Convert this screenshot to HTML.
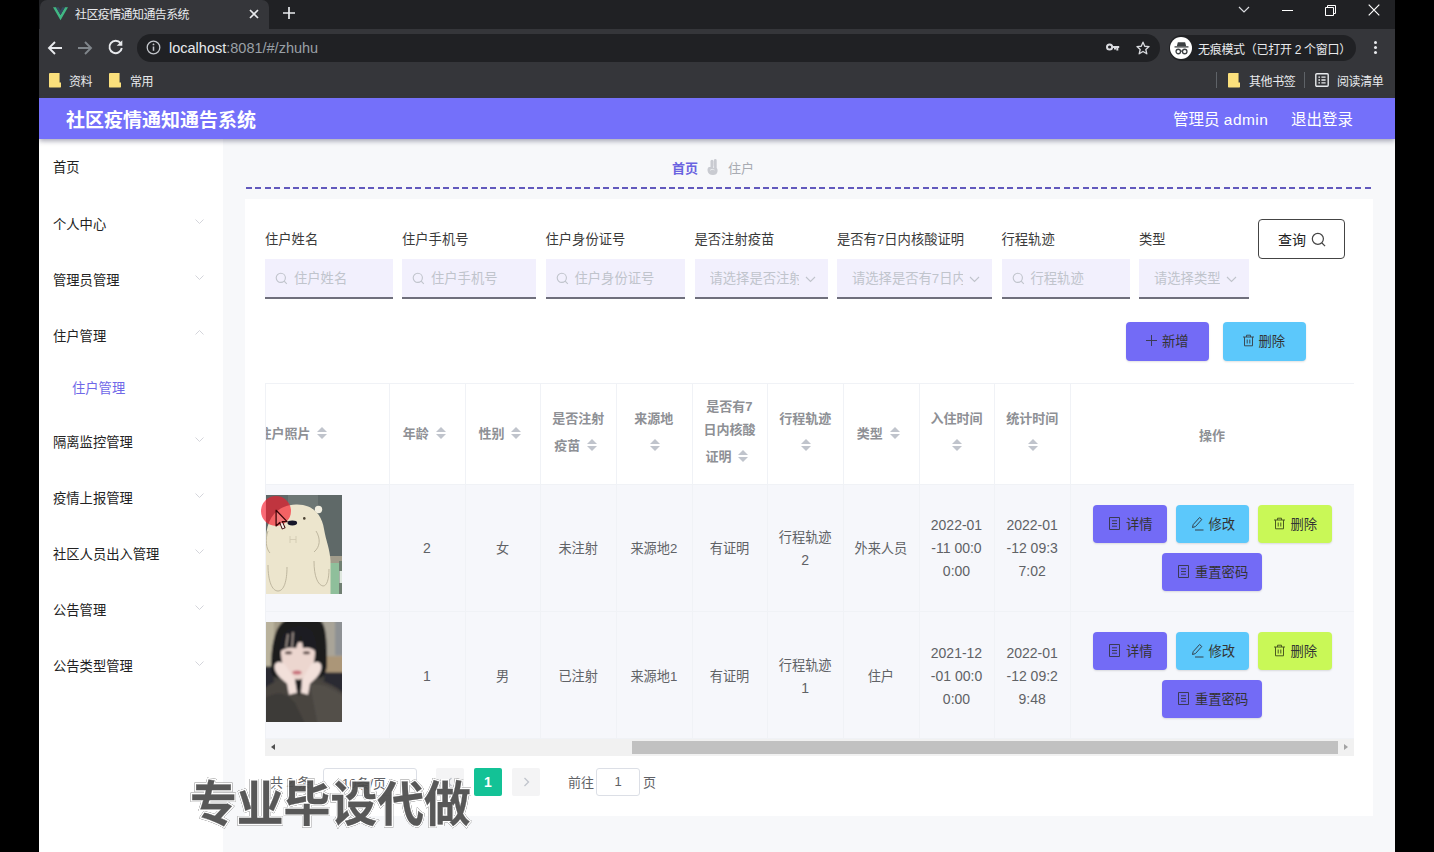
<!DOCTYPE html>
<html lang="zh-CN">
<head>
<meta charset="utf-8">
<title>社区疫情通知通告系统</title>
<style>
*{box-sizing:border-box;margin:0;padding:0}
html,body{width:1434px;height:852px;overflow:hidden;background:#000}
body{position:relative;font-family:"Liberation Sans","Noto Sans CJK SC",sans-serif;color:#333;font-size:14px}
.abs{position:absolute}
#win{position:absolute;left:39px;top:0;width:1356px;height:852px;background:#f7f8fa;overflow:hidden}
/* ---------- browser chrome ---------- */
#tabstrip{position:absolute;left:0;top:0;width:1356px;height:29px;background:#202124}
#tab{position:absolute;left:1px;top:0;width:229px;height:29px;background:#35363a;border-radius:7px 7px 0 0}
#tab .ttl{position:absolute;left:35px;top:5px;font-size:12px;color:#e8eaed;white-space:nowrap;letter-spacing:-0.6px}
#toolbar{position:absolute;left:0;top:29px;width:1356px;height:36px;background:#35363a}
#urlpill{position:absolute;left:98px;top:5px;width:1023px;height:28px;border-radius:14px;background:#202124}
#url{position:absolute;left:32px;top:5.5px;font-size:14.5px;color:#e8eaed;white-space:nowrap}
#url span{color:#9aa0a6}
#incog{position:absolute;left:1130px;top:6px;width:187px;height:26px;border-radius:13px;background:#202124}
#incog .t{position:absolute;left:29px;top:5px;font-size:12px;color:#e8eaed;white-space:nowrap;letter-spacing:-0.3px}
#bmbar{position:absolute;left:0;top:65px;width:1356px;height:33px;background:#35363a}
.bm{position:absolute;top:7px;font-size:12px;color:#e8eaed;white-space:nowrap;letter-spacing:-0.4px}
.folder{position:absolute;top:8px;width:12px;height:14.500px;background:#fbe07c;border-radius:1px;clip-path:polygon(0 0,88% 0,88% 66%,100% 66%,100% 100%,0 100%)}
.vsep{position:absolute;top:7px;width:1px;height:16px;background:#5f6368}
/* ---------- app header ---------- */
#hdr{position:absolute;left:0;top:98px;width:1356px;height:41px;background:#7470fa;box-shadow:0 2px 5px rgba(60,60,90,.45);z-index:5}
#hdr .title{position:absolute;left:27px;top:7px;font-size:19px;font-weight:bold;color:#fff;white-space:nowrap;letter-spacing:0px}
#hdr .r{position:absolute;top:9px;font-size:15.5px;color:#fff;white-space:nowrap}
/* ---------- sidebar ---------- */
#side{position:absolute;left:0;top:139px;width:184px;height:713px;background:#fff}
.mi{position:absolute;left:14px;margin-top:1px;font-size:13.3px;color:#222;white-space:nowrap}
.mi.sub{left:33px;color:#6f68e8}
.chev{position:absolute;left:155.500px;width:9px;height:9px;margin-top:-1.500px}
/* ---------- main ---------- */
#main{position:absolute;left:184px;top:139px;width:1172px;height:713px;background:#f7f8fa}

/* breadcrumb */
#bc{position:absolute;left:449px;top:19px;font-size:13px;white-space:nowrap}
#bc b{color:#6a63e0}
#bc .cur{color:#a8abb2}
#dash{position:absolute;left:23px;top:48px;width:1127px;height:2px;background:repeating-linear-gradient(90deg,#6259bd 0,#6259bd 6px,transparent 6px,transparent 9.4px)}
#card{position:absolute;left:22px;top:60px;width:1128px;height:617px;background:#fff}
#ci{position:absolute;left:1px;top:-1px;width:1127px;height:618px}
/* form */
.lbl{position:absolute;top:31px;font-size:13.3px;color:#3a3a3a;white-space:nowrap}
.inp{position:absolute;top:61px;height:40px;background:#f2f0fd;border-bottom:2px solid #6f6f7c;font-size:13.300px;color:#c0c4cc;white-space:nowrap;overflow:hidden}
.inp .ph{position:absolute;left:29px;top:9px}
.inp.sel .ph{left:15px}
.inp svg.mg{position:absolute;left:10px;top:13px}
.inp svg.dn{position:absolute;top:17px}
.btn{position:absolute;border-radius:4px;font-size:13.300px;color:#333;white-space:nowrap;box-shadow:0 1px 2px rgba(0,0,0,.12)}
.btn span{position:absolute;top:9px}
.btn svg{position:absolute}
/* table */
#tbl{position:absolute;left:19px;top:185px;width:1089px;height:357px;border-top:1px solid #f0f2f6;border-left:1px solid #f0f2f6;overflow:hidden}
.hrow{position:absolute;left:0;top:0;width:1089px;height:101px;background:#fff;border-bottom:1px solid #f0f2f6}
.row{position:absolute;left:0;width:1089px;height:128px;background:#f6f7fb;border-bottom:1px solid #f0f2f6}
.vl{position:absolute;top:0;width:1px;height:357px;background:#f0f2f6}
.th{position:absolute;font-size:13px;font-weight:bold;color:#8e9095;text-align:center;line-height:23px;white-space:nowrap}
.td{position:absolute;font-size:13.2px;color:#606266;text-align:center;line-height:23px;white-space:nowrap}
.car{display:inline-block;position:relative;width:24px;height:14px;vertical-align:-2px}
.car:before,.car:after{content:"";position:absolute;left:7px;border:5px solid transparent}
.car:before{top:-4px;border-bottom-color:#c0c4cc}
.car:after{top:8px;border-top-color:#c0c4cc}
.car.solo{width:10px;margin-left:1.500px}
.car.solo:before,.car.solo:after{left:0}
.td.n{font-size:14px}
/* photos */
.photo{position:absolute;left:0px;width:76px;height:99px;display:block}
/* scrollbar */
#hsb{position:absolute;left:19px;top:541px;width:1089px;height:16.500px;background:#f1f1f1}
#hsb .thumb{position:absolute;left:367px;top:2px;width:706px;height:13px;background:#c1c1c1}
/* pagination */
.pg{position:absolute;font-size:13px;color:#606266;white-space:nowrap}
.pgb{position:absolute;top:570px;width:28px;height:28px;border-radius:2px;background:#f4f4f5}
.pgi{position:absolute;top:570px;height:28px;border:1px solid #dcdfe6;border-radius:3px;background:#fff}
/* watermark */
#wm::after{content:"专业毕设代做";position:absolute;left:0;top:0;-webkit-text-stroke:.3px #4c4c4c;color:#4c4c4c}
#wm{position:absolute;left:151px;top:774.5px;font-size:46.8px;font-weight:700;line-height:60px;color:#5a5a5a;white-space:nowrap;letter-spacing:0;transform-origin:0 50%;transform:scaleY(1.03);-webkit-text-stroke:3.2px #fff;opacity:.93;filter:drop-shadow(0 0 .5px rgba(70,70,70,.9)) drop-shadow(0 0 .4px rgba(70,70,70,.55));z-index:20}
</style>
</head>
<body>
<div id="win">
  <!-- tab strip -->
  <div id="tabstrip">
    <div id="tab">
      <svg class="abs" style="left:13px;top:7px" width="15" height="13.5" viewBox="0 0 16 14"><path d="M0 0h3.2L8 8.3 12.8 0H16L8 14z" fill="#41b883"/><path d="M3.2 0h2.9L8 3.4 9.9 0h2.9L8 8.3z" fill="#35495e"/></svg>
      <span class="ttl">社区疫情通知通告系统</span>
      <svg class="abs" style="left:208px;top:8px" width="12" height="12" viewBox="0 0 12 12"><path d="M2 2l8 8M10 2l-8 8" stroke="#e8eaed" stroke-width="1.700"/></svg>
    </div>
    <svg class="abs" style="left:243px;top:6px" width="14" height="14" viewBox="0 0 14 14"><path d="M7 1v12M1 7h12" stroke="#e8eaed" stroke-width="1.7"/></svg>
    <!-- window controls -->
    <svg class="abs" style="left:1199px;top:6px" width="12" height="8" viewBox="0 0 12 8"><path d="M1 1l5 5 5-5" stroke="#dadce0" stroke-width="1.2" fill="none"/></svg>
    <div class="abs" style="left:1243px;top:10px;width:11px;height:1px;background:#fff"></div>
    <svg class="abs" style="left:1286px;top:5px" width="11" height="11" viewBox="0 0 11 11"><path d="M.5 2.5h8v8h-8z" stroke="#fff" fill="none"/><path d="M2.5 2.5v-2h8v8h-2" stroke="#fff" fill="none"/></svg>
    <svg class="abs" style="left:1329px;top:4px" width="12" height="12" viewBox="0 0 12 12"><path d="M.7.7l10.6 10.6M11.3.7L.7 11.3" stroke="#fff" stroke-width="1.2"/></svg>
  </div>
  <!-- toolbar -->
  <div id="toolbar">
    <svg class="abs" style="left:8px;top:11px" width="16" height="16" viewBox="0 0 16 16"><path d="M15 8H2.5M8 2L2 8l6 6" stroke="#e8eaed" stroke-width="1.9" fill="none"/></svg>
    <svg class="abs" style="left:38px;top:11px" width="16" height="16" viewBox="0 0 16 16"><path d="M1 8h12.5M8 2l6 6-6 6" stroke="#80868b" stroke-width="1.9" fill="none"/></svg>
    <svg class="abs" style="left:68px;top:10px" width="17" height="17" viewBox="0 0 17 17"><path d="M13.6 4.2A6.2 6.2 0 1 0 14.8 9" stroke="#e8eaed" stroke-width="1.9" fill="none"/><path d="M15.3 1.2v5.6H9.7z" fill="#e8eaed"/></svg>
    <div id="urlpill">
      <svg class="abs" style="left:9px;top:6px" width="15" height="15" viewBox="0 0 15 15"><circle cx="7.5" cy="7.5" r="6.3" stroke="#c4c7cc" stroke-width="1.3" fill="none"/><path d="M7.5 6.5v4.3" stroke="#c4c7cc" stroke-width="1.5"/><circle cx="7.5" cy="4.4" r=".9" fill="#c4c7cc"/></svg>
      <div id="url">localhost<span>:8081/#/zhuhu</span></div>
      <!-- key -->
      <svg class="abs" style="left:969px;top:9px" width="14" height="9" viewBox="0 0 14 9"><circle cx="3.6" cy="4" r="2.6" stroke="#dadce0" stroke-width="2" fill="none"/><path d="M6 4h7.2M11.3 4v3.6M9 4v2.6" stroke="#dadce0" stroke-width="2" fill="none"/></svg>
      <!-- star -->
      <svg class="abs" style="left:999px;top:7px" width="14" height="14" viewBox="0 0 15 15"><path d="M7.5 1.3l1.9 4.3 4.6.4-3.5 3.1 1.1 4.6-4.1-2.5-4.1 2.5 1.1-4.6L1 6l4.6-.4z" stroke="#dadce0" stroke-width="1.4" fill="none" stroke-linejoin="round"/></svg>
    </div>
    <div id="incog">
      <div class="abs" style="left:1px;top:2px;width:22px;height:22px;border-radius:50%;background:#fff"></div>
      <svg class="abs" style="left:4.500px;top:5.500px" width="15" height="15" viewBox="0 0 14 14"><path d="M3.6 1.2h6.8l1 3.6H2.6z" fill="#3c4043"/><path d="M.5 5.5h13" stroke="#3c4043" stroke-width="1.2"/><circle cx="4" cy="9.8" r="2.1" stroke="#3c4043" stroke-width="1.2" fill="none"/><circle cx="10" cy="9.8" r="2.1" stroke="#3c4043" stroke-width="1.2" fill="none"/><path d="M6 9.4h2" stroke="#3c4043" stroke-width="1.1"/></svg>
      <span class="t">无痕模式（已打开 2 个窗口）</span>
    </div>
    <div class="abs" style="left:1335px;top:12px;width:3px;height:3px;border-radius:50%;background:#e8eaed;box-shadow:0 5px 0 #e8eaed,0 10px 0 #e8eaed"></div>
  </div>
  <!-- bookmarks bar -->
  <div id="bmbar">
    <div class="folder" style="left:10px"></div><span class="bm" style="left:30px">资料</span>
    <div class="folder" style="left:70px"></div><span class="bm" style="left:91px">常用</span>
    <div class="vsep" style="left:1177px"></div>
    <div class="folder" style="left:1189px"></div><span class="bm" style="left:1210px">其他书签</span>
    <div class="vsep" style="left:1265px"></div>
    <svg class="abs" style="left:1276px;top:8px" width="14" height="14" viewBox="0 0 14 14"><rect x=".8" y=".8" width="12.4" height="12.4" rx="1" stroke="#e8eaed" stroke-width="1.4" fill="none"/><path d="M3.4 4.2h1.6M3.4 7h1.6M3.4 9.8h1.6M6.4 4.2h4.2M6.4 7h4.2M6.4 9.8h4.2" stroke="#e8eaed" stroke-width="1.3"/></svg>
    <span class="bm" style="left:1298px">阅读清单</span>
  </div>
  <!-- app header -->
  <div id="hdr">
    <span class="title">社区疫情通知通告系统</span>
    <span class="r" style="left:1134px">管理员 <span style="letter-spacing:.45px">admin</span></span>
    <span class="r" style="left:1252px">退出登录</span>
  </div>
  <!-- sidebar -->
  <div id="side">
    <span class="mi" style="top:17px">首页</span>
    <span class="mi" style="top:74px">个人中心</span>
    <span class="mi" style="top:130px">管理员管理</span>
    <span class="mi" style="top:186px">住户管理</span>
    <span class="mi sub" style="top:238px">住户管理</span>
    <span class="mi" style="top:292px">隔离监控管理</span>
    <span class="mi" style="top:348px">疫情上报管理</span>
    <span class="mi" style="top:404px">社区人员出入管理</span>
    <span class="mi" style="top:460px">公告管理</span>
    <span class="mi" style="top:516px">公告类型管理</span>
<svg class="chev" style="top:79px" viewBox="0 0 9 9"><path d="M.5 2.500l4 4 4-4" stroke="#d4d5db" stroke-width="1" fill="none"/></svg>
<svg class="chev" style="top:135px" viewBox="0 0 9 9"><path d="M.5 2.500l4 4 4-4" stroke="#d4d5db" stroke-width="1" fill="none"/></svg>
<svg class="chev" style="top:297px" viewBox="0 0 9 9"><path d="M.5 2.500l4 4 4-4" stroke="#d4d5db" stroke-width="1" fill="none"/></svg>
<svg class="chev" style="top:353px" viewBox="0 0 9 9"><path d="M.5 2.500l4 4 4-4" stroke="#d4d5db" stroke-width="1" fill="none"/></svg>
<svg class="chev" style="top:409px" viewBox="0 0 9 9"><path d="M.5 2.500l4 4 4-4" stroke="#d4d5db" stroke-width="1" fill="none"/></svg>
<svg class="chev" style="top:465px" viewBox="0 0 9 9"><path d="M.5 2.500l4 4 4-4" stroke="#d4d5db" stroke-width="1" fill="none"/></svg>
<svg class="chev" style="top:521px" viewBox="0 0 9 9"><path d="M.5 2.500l4 4 4-4" stroke="#d4d5db" stroke-width="1" fill="none"/></svg>
<svg class="chev" style="top:190px" viewBox="0 0 9 9"><path d="M.5 6.500l4-4 4 4" stroke="#d4d5db" stroke-width="1" fill="none"/></svg>
  </div>
  <!-- main -->
  <div id="main">
<div id="bc"><b>首页</b><svg class="abs" style="left:35px;top:1px" width="11" height="16" viewBox="0 0 11 16"><path d="M3.500 8V2.200a1.500 1.500 0 0 1 3 0V6.500h.4V1.500a1.400 1.400 0 0 1 2.800 0V9c.8.800 1 2 .8 3.500C10.200 15 8.500 16 6 16 3 16 1 14.500.6 12 .3 10 .8 8.500 2 8z" fill="#c9cbd1"/><path d="M3 11.500c1-1.400 3-1.400 4.500-.5M6.600 6.500V9" stroke="#eceef1" stroke-width=".9" fill="none"/></svg><span class="cur abs" style="left:56px;top:0">住户</span></div>
<div id="dash"></div>
<div id="card"><div id="ci">
<span class="lbl" style="left:19px">住户姓名</span>
<span class="lbl" style="left:156px">住户手机号</span>
<span class="lbl" style="left:299.5px">住户身份证号</span>
<span class="lbl" style="left:448.5px">是否注射疫苗</span>
<span class="lbl" style="left:591px">是否有7日内核酸证明</span>
<span class="lbl" style="left:755.5px">行程轨迹</span>
<span class="lbl" style="left:893px">类型</span>
<div class="inp" style="left:19px;width:128px"><svg class="mg" width="13" height="13" viewBox="0 0 13 13"><circle cx="5.8" cy="5.8" r="4.6" stroke="#c0c4cc" stroke-width="1.1" fill="none"/><path d="M9.2 9.2l2.6 2.6" stroke="#c0c4cc" stroke-width="1.1"/></svg><span class="ph">住户姓名</span></div>
<div class="inp" style="left:156px;width:134px"><svg class="mg" width="13" height="13" viewBox="0 0 13 13"><circle cx="5.8" cy="5.8" r="4.6" stroke="#c0c4cc" stroke-width="1.1" fill="none"/><path d="M9.2 9.2l2.6 2.6" stroke="#c0c4cc" stroke-width="1.1"/></svg><span class="ph">住户手机号</span></div>
<div class="inp" style="left:299.5px;width:139.5px"><svg class="mg" width="13" height="13" viewBox="0 0 13 13"><circle cx="5.8" cy="5.8" r="4.6" stroke="#c0c4cc" stroke-width="1.1" fill="none"/><path d="M9.2 9.2l2.6 2.6" stroke="#c0c4cc" stroke-width="1.1"/></svg><span class="ph">住户身份证号</span></div>
<div class="inp sel" style="left:448.5px;width:133px"><span class="ph" style="width:89px;overflow:hidden;display:block">请选择是否注射疫苗</span><svg class="dn" style="left:110px" width="11" height="7" viewBox="0 0 11 7"><path d="M1 1l4.5 4.5L10 1" stroke="#c0c4cc" stroke-width="1.1" fill="none"/></svg></div>
<div class="inp sel" style="left:591px;width:155px"><span class="ph" style="width:111px;overflow:hidden;display:block">请选择是否有7日内核酸证明</span><svg class="dn" style="left:132px" width="11" height="7" viewBox="0 0 11 7"><path d="M1 1l4.5 4.5L10 1" stroke="#c0c4cc" stroke-width="1.1" fill="none"/></svg></div>
<div class="inp" style="left:755.5px;width:128px"><svg class="mg" width="13" height="13" viewBox="0 0 13 13"><circle cx="5.8" cy="5.8" r="4.6" stroke="#c0c4cc" stroke-width="1.1" fill="none"/><path d="M9.2 9.2l2.6 2.6" stroke="#c0c4cc" stroke-width="1.1"/></svg><span class="ph">行程轨迹</span></div>
<div class="inp sel" style="left:893px;width:109.5px"><span class="ph" style="width:65.5px;overflow:hidden;display:block">请选择类型</span><svg class="dn" style="left:86.5px" width="11" height="7" viewBox="0 0 11 7"><path d="M1 1l4.5 4.5L10 1" stroke="#c0c4cc" stroke-width="1.1" fill="none"/></svg></div>
<div class="btn" style="left:1012px;top:21px;width:87px;height:40px;background:#fff;border:1px solid #444;box-shadow:none;font-size:14px;color:#222"><span style="left:19px;top:9px">查询</span><svg style="left:52px;top:11.500px" width="15.500" height="15.500" viewBox="0 0 14 14"><circle cx="6.2" cy="6.2" r="5" stroke="#444" stroke-width="1.1" fill="none"/><path d="M9.9 9.9l2.8 2.8" stroke="#444" stroke-width="1.1"/></svg></div>
<div class="btn" style="left:880px;top:124px;width:83px;height:39px;background:#736bf6"><svg style="left:20px;top:13px" width="11" height="11" viewBox="0 0 11 11"><path d="M5.5 0v11M0 5.5h11" stroke="#3b3b55" stroke-width="1"/></svg><span style="left:36px">新增</span></div>
<div class="btn" style="left:976.5px;top:124px;width:83px;height:39px;background:#5cc8fb"><svg style="left:19px;top:12px" width="13" height="13" viewBox="0 0 13 13"><path d="M1 3h11M4.5 3V1.2h4V3M2.5 3v8.8h8V3M5.2 5.5v4M7.8 5.5v4" stroke="#3b4a55" stroke-width="1" fill="none"/></svg><span style="left:36px">删除</span></div>
<div id="tbl">
<div class="hrow"></div>
<div class="row" style="top:101px;height:127px"></div>
<div class="row" style="top:228px;height:127px"></div>
<svg class="photo" style="top:111px" viewBox="0 0 76 99"><defs><filter id="bl"><feGaussianBlur stdDeviation=".45"/></filter></defs><g filter="url(#bl)"><rect width="76" height="99" fill="#5f6968"/><rect x="22" y="0" width="30" height="14" fill="#6d7775"/><rect x="64" y="66" width="9" height="33" fill="#8fbf9b"/><rect x="64" y="61" width="12" height="7" fill="#a19c8b"/><rect x="73" y="66" width="3" height="33" fill="#6f7f72"/><rect x="73.500" y="76" width="2.500" height="12" fill="#dfe8df"/><circle cx="52.500" cy="14.500" r="3.700" fill="#f1eee0"/><path d="M0 99V42C1 24 10 10 30 9.500C47 9 56 20 58 34C60 46 64 54 64.500 66V99z" fill="#ece5cd"/><path d="M2 36C-1 44 0 54 4 58M50 36C55 44 54 52 48 57M2 70C2 86 6 96 12 96C18 96 21 86 21 72M48 66C48 82 52 90 57 91C61 91 63 84 63 74" stroke="#b9b19a" stroke-width=".9" fill="none"/><path d="M24 41v7M30 41v7M24 44.500h6" stroke="#d2cab2" stroke-width=".9" fill="none"/><ellipse cx="26.300" cy="28" rx="4.800" ry="2.400" fill="#15162b"/><circle cx="38.300" cy="23.400" r="1.300" fill="#4b4233"/></g></svg>
<svg class="photo" style="top:238px;height:100px" viewBox="0 0 76 99" preserveAspectRatio="none"><defs><filter id="bl2" x="-5%" y="-5%" width="110%" height="110%"><feGaussianBlur stdDeviation=".9"/></filter><clipPath id="gc"><rect width="76" height="99"/></clipPath></defs><g clip-path="url(#gc)"><g filter="url(#bl2)"><rect x="-4" y="-4" width="84" height="107" fill="#45423e"/><rect x="-4" y="-4" width="84" height="56" fill="#a49c88"/><rect x="-4" y="-4" width="12" height="50" fill="#b9b29c"/><rect x="56" y="-4" width="24" height="38" fill="#a9a498"/><rect x="69" y="-4" width="11" height="37" fill="#8e9194"/><rect x="58" y="34" width="22" height="17" fill="#ab9678"/><path d="M-4 44h12v22H-4zM58 50h22v28H58z" fill="#2a2a30"/><path d="M5 44C5 14 13 -2 22 -2h30c7 0 9 14 9 42c0 8-2 13-6 15H10C6 53 5 50 5 44z" fill="#1a1a1e"/><path d="M15 30C15 22 22 20 32 20S49 22 49 30C49 44 42 57 32 57S15 44 15 30z" fill="#ecd6cf"/><path d="M13 30C14 8 24 4 34 4C45 4 51 12 51 30C46 25 40 25 37 26L35 12 30 26C25 24 18 26 13 30z" fill="#1e1d21"/><path d="M22 12L20 25M27 10l-1 15" stroke="#a39690" stroke-width="1.600"/><ellipse cx="22.500" cy="30.500" rx="3.600" ry="1.500" fill="#54423f"/><ellipse cx="40.500" cy="30.500" rx="3.600" ry="1.500" fill="#54423f"/><ellipse cx="31" cy="50" rx="4.600" ry="2" fill="#c8707a"/><path d="M-4 103V68C6 58 18 55 29 58l4 10 6-10c12-3 26 2 41 14v31z" fill="#484541"/><path d="M44 62C56 60 70 66 80 76v27H52z" fill="#524f4a"/><path d="M27 58l6 15 6-15z" fill="#1c1c1f"/><path d="M8.500 45C8 39 15 38 19 42L29 57 31 70 23 72 21 61C15 56 9 51 8.500 45z" fill="#f2e0da"/><path d="M55.500 45C56 39 49 38 45 42L36 57 35 70 42 72 44 61C50 56 55 51 55.500 45z" fill="#f2e0da"/><path d="M-4 103V78C8 68 19 68 29 80L40 103z" fill="#3d3a37"/></g></g></svg>
<div class="vl" style="left:123.00px"></div>
<div class="vl" style="left:198.67px"></div>
<div class="vl" style="left:274.33px"></div>
<div class="vl" style="left:350.00px"></div>
<div class="vl" style="left:425.67px"></div>
<div class="vl" style="left:501.33px"></div>
<div class="vl" style="left:577.00px"></div>
<div class="vl" style="left:652.67px"></div>
<div class="vl" style="left:728.33px"></div>
<div class="vl" style="left:804.00px"></div>
<div class="vl" style="left:1088px"></div>
<div class="th" style="left:-7.6px;top:37.5px;text-align:left">住户照片<i class="car"></i></div>
<div class="th" style="left:124.00px;width:75.67px;top:37.5px">年龄<i class="car"></i></div>
<div class="th" style="left:199.67px;width:75.66px;top:37.5px">性别<i class="car"></i></div>
<div class="th" style="left:274.33px;width:75.67px;top:22.5px">是否注射</div>
<div class="th" style="left:275.33px;width:75.67px;top:49.5px">疫苗<i class="car"></i></div>
<div class="th" style="left:350.00px;width:75.67px;top:22.5px">来源地</div>
<div class="th" style="left:350.00px;width:75.67px;top:49.5px"><i class="car solo"></i></div>
<div class="th" style="left:425.67px;width:75.66px;top:11.0px">是否有7</div>
<div class="th" style="left:425.67px;width:75.66px;top:34.0px">日内核酸</div>
<div class="th" style="left:426.67px;width:75.66px;top:60.5px">证明<i class="car"></i></div>
<div class="th" style="left:501.33px;width:75.67px;top:22.5px">行程轨迹</div>
<div class="th" style="left:501.33px;width:75.67px;top:49.5px"><i class="car solo"></i></div>
<div class="th" style="left:578.00px;width:75.67px;top:37.5px">类型<i class="car"></i></div>
<div class="th" style="left:652.67px;width:75.66px;top:23.0px">入住时间</div>
<div class="th" style="left:652.67px;width:75.66px;top:49.5px"><i class="car solo"></i></div>
<div class="th" style="left:728.33px;width:75.67px;top:23.0px">统计时间</div>
<div class="th" style="left:728.33px;width:75.67px;top:49.5px"><i class="car solo"></i></div>
<div class="th" style="left:804.00px;width:284.00px;top:39.5px">操作</div>
<div class="td n" style="left:123.00px;width:75.67px;top:153.0px">2</div>
<div class="td" style="left:198.67px;width:75.66px;top:153.0px">女</div>
<div class="td" style="left:274.33px;width:75.67px;top:153.0px">未注射</div>
<div class="td" style="left:350.00px;width:75.67px;top:153.0px">来源地2</div>
<div class="td" style="left:425.67px;width:75.66px;top:153.0px">有证明</div>
<div class="td" style="left:501.33px;width:75.67px;top:141.5px">行程轨迹</div>
<div class="td n" style="left:501.33px;width:75.67px;top:164.5px">2</div>
<div class="td" style="left:577.00px;width:75.67px;top:153.0px">外来人员</div>
<div class="td n" style="left:652.67px;width:75.66px;top:130.0px">2022-01</div>
<div class="td n" style="left:652.67px;width:75.66px;top:153.0px">-11 00:0</div>
<div class="td n" style="left:652.67px;width:75.66px;top:176.0px">0:00</div>
<div class="td n" style="left:728.33px;width:75.67px;top:130.0px">2022-01</div>
<div class="td n" style="left:728.33px;width:75.67px;top:153.0px">-12 09:3</div>
<div class="td n" style="left:728.33px;width:75.67px;top:176.0px">7:02</div>
<div class="td n" style="left:123.00px;width:75.67px;top:281.0px">1</div>
<div class="td" style="left:198.67px;width:75.66px;top:281.0px">男</div>
<div class="td" style="left:274.33px;width:75.67px;top:281.0px">已注射</div>
<div class="td" style="left:350.00px;width:75.67px;top:281.0px">来源地1</div>
<div class="td" style="left:425.67px;width:75.66px;top:281.0px">有证明</div>
<div class="td" style="left:501.33px;width:75.67px;top:269.5px">行程轨迹</div>
<div class="td n" style="left:501.33px;width:75.67px;top:292.5px">1</div>
<div class="td" style="left:577.00px;width:75.67px;top:281.0px">住户</div>
<div class="td n" style="left:652.67px;width:75.66px;top:258.0px">2021-12</div>
<div class="td n" style="left:652.67px;width:75.66px;top:281.0px">-01 00:0</div>
<div class="td n" style="left:652.67px;width:75.66px;top:304.0px">0:00</div>
<div class="td n" style="left:728.33px;width:75.67px;top:258.0px">2022-01</div>
<div class="td n" style="left:728.33px;width:75.67px;top:281.0px">-12 09:2</div>
<div class="td n" style="left:728.33px;width:75.67px;top:304.0px">9:48</div>
<div class="btn" style="left:827px;top:120.500px;width:73.5px;height:38px;background:#736bf6"><svg style="left:16px;top:12px" width="11" height="13" viewBox="0 0 11 13"><path d="M.5.5h10v12H.5z" stroke="#3a3a55" fill="none"/><path d="M3 3.8h5M3 6.5h5M3 9.2h5" stroke="#3a3a55" stroke-width="1"/></svg><span style="left:33px">详情</span></div>
<div class="btn" style="left:909.5px;top:120.500px;width:73.5px;height:38px;background:#5cc8fb"><svg style="left:14px;top:11px" width="14" height="15" viewBox="0 0 14 15"><path d="M3.2 8.6L9.6 1.5l2.2 2-6.4 7.1-2.9.9z" stroke="#33414d" fill="none" stroke-linejoin="round"/><path d="M5 14h8.500" stroke="#33414d"/></svg><span style="left:33px">修改</span></div>
<div class="btn" style="left:991.5px;top:120.500px;width:74px;height:38px;background:#c9f857"><svg style="left:15px;top:12px" width="13" height="13" viewBox="0 0 13 13"><path d="M1 3h11M4.5 3V1.2h4V3M2.5 3v8.8h8V3M5.2 5.5v4M7.8 5.5v4" stroke="#4a5a20" stroke-width="1" fill="none"/></svg><span style="left:33px">删除</span></div>
<div class="btn" style="left:896px;top:169px;width:100px;height:38px;background:#736bf6"><svg style="left:16px;top:12px" width="11" height="13" viewBox="0 0 11 13"><path d="M.5.5h10v12H.5z" stroke="#3a3a55" fill="none"/><path d="M3 3.8h5M3 6.5h5M3 9.2h5" stroke="#3a3a55" stroke-width="1"/></svg><span style="left:33px">重置密码</span></div>
<div class="btn" style="left:827px;top:247.500px;width:73.5px;height:38px;background:#736bf6"><svg style="left:16px;top:12px" width="11" height="13" viewBox="0 0 11 13"><path d="M.5.5h10v12H.5z" stroke="#3a3a55" fill="none"/><path d="M3 3.8h5M3 6.5h5M3 9.2h5" stroke="#3a3a55" stroke-width="1"/></svg><span style="left:33px">详情</span></div>
<div class="btn" style="left:909.5px;top:247.500px;width:73.5px;height:38px;background:#5cc8fb"><svg style="left:14px;top:11px" width="14" height="15" viewBox="0 0 14 15"><path d="M3.2 8.6L9.6 1.5l2.2 2-6.4 7.1-2.9.9z" stroke="#33414d" fill="none" stroke-linejoin="round"/><path d="M5 14h8.500" stroke="#33414d"/></svg><span style="left:33px">修改</span></div>
<div class="btn" style="left:991.5px;top:247.500px;width:74px;height:38px;background:#c9f857"><svg style="left:15px;top:12px" width="13" height="13" viewBox="0 0 13 13"><path d="M1 3h11M4.5 3V1.2h4V3M2.5 3v8.8h8V3M5.2 5.5v4M7.8 5.5v4" stroke="#4a5a20" stroke-width="1" fill="none"/></svg><span style="left:33px">删除</span></div>
<div class="btn" style="left:896px;top:296px;width:100px;height:38px;background:#736bf6"><svg style="left:16px;top:12px" width="11" height="13" viewBox="0 0 11 13"><path d="M.5.5h10v12H.5z" stroke="#3a3a55" fill="none"/><path d="M3 3.8h5M3 6.5h5M3 9.2h5" stroke="#3a3a55" stroke-width="1"/></svg><span style="left:33px">重置密码</span></div>
</div>
<div id="hsb"><div class="thumb"></div><div class="abs" style="left:6px;top:5px;border:3.500px solid transparent;border-right:4px solid #505050;border-left:0"></div><div class="abs" style="left:1079px;top:5px;border:3.500px solid transparent;border-left:4px solid #a3a3a3;border-right:0"></div></div>
<span class="pg" style="left:24px;top:573.5px">共 2 条</span>
<div class="pgi" style="left:77px;width:94px"><span class="pg" style="left:18px;top:4px">10条/页</span></div>
<div class="pgb" style="left:190px"><svg class="abs" style="left:10px;top:9px" width="7" height="10" viewBox="0 0 7 10"><path d="M5.500 1L1.500 5l4 4" stroke="#c0c4cc" stroke-width="1.300" fill="none"/></svg></div>
<div class="pgb" style="left:228px;background:#13c296;color:#fff;font-weight:bold;font-size:14px;text-align:center;line-height:28px">1</div>
<div class="pgb" style="left:266px"><svg class="abs" style="left:11px;top:9px" width="7" height="10" viewBox="0 0 7 10"><path d="M1.500 1l4 4-4 4" stroke="#c0c4cc" stroke-width="1.300" fill="none"/></svg></div>
<span class="pg" style="left:322px;top:573.5px">前往</span>
<div class="pgi" style="left:350px;width:44px;text-align:center;line-height:26px;font-size:13px;color:#606266">1</div>
<span class="pg" style="left:397px;top:573.5px">页</span>
</div></div>

  </div>
<div class="abs" style="left:222px;top:496px;width:30px;height:30px;border-radius:50%;background:rgba(247,23,40,.64);z-index:19"></div>
<svg class="abs" style="left:236.400px;top:509.300px;z-index:20" width="13.200" height="21.300" viewBox="0 0 12 19"><path d="M1 1v14.200l3.400-3.100 2.300 5.700 2.300-.9-2.400-5.600H11z" fill="#fff" fill-opacity=".13" stroke="#3a0508" stroke-width="1.150" stroke-linejoin="round"/><path d="M5 13l1.900 4.500 1.700-.7-1.900-4.500z" fill="#fff" fill-opacity=".8"/></svg>
<div id="wm">专业毕设代做</div>
</div>
</body>
</html>
